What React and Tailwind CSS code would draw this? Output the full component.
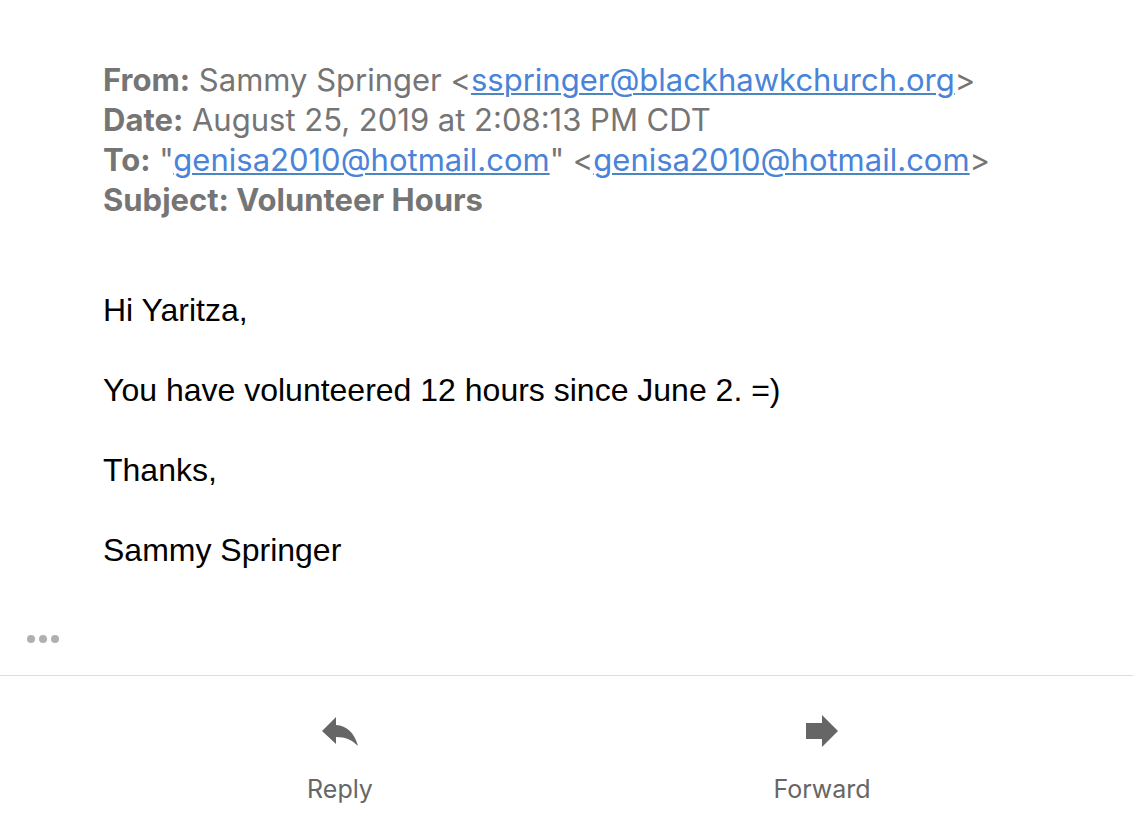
import React from 'react';

const message = {
  from: "Sammy Springer",
  fromEmail: "sspringer@blackhawkchurch.org",
  date: "August 25, 2019 at 2:08:13 PM CDT",
  toEmail: "genisa2010@hotmail.com",
  subject: "Volunteer Hours",
  body: [
    "Hi Yaritza,",
    "You have volunteered 12 hours since June 2. =)",
    "Thanks,",
    "Sammy Springer",
  ],
}

const MailLink = function ({ email }) {
  return (
    <a href={`mailto:${email}`} className="text-[#4a83d8] underline decoration-[#4a86c0] decoration-2 underline-offset-2">
      {email}
    </a>
  )
}

const App = function () {
  return (
    <div className="bg-white font-['Inter',sans-serif]">
      <main className="px-[103px] pt-15">
        <header className="text-[31px] leading-10 text-[#757575]">
          <p><b className="font-bold">From:</b> {message.from} &lt;<MailLink email={message.fromEmail} />&gt;</p>
          <p><b className="font-bold">Date:</b> {message.date}</p>
          <p>
            <b className="font-bold">To:</b> "<MailLink email={message.toEmail} />" &lt;<MailLink email={message.toEmail} />&gt;
          </p>
          <p className="font-bold">Subject: {message.subject}</p>
        </header>

        <section className="mt-[70px] flex flex-col gap-10 font-['Liberation_Sans',sans-serif] text-[32px] leading-10 text-black">
          {message.body.map((line) => (
            <p key={line}>{line}</p>
          ))}
        </section>
      </main>

      <div className="px-[27px] pt-[59px] pb-[26px]">
        <button type="button" aria-label="Show trimmed content" className="flex h-5 items-center gap-1">
          <span className="size-2 rounded-full bg-[#b0b0b0]" />
          <span className="size-2 rounded-full bg-[#b0b0b0]" />
          <span className="size-2 rounded-full bg-[#b0b0b0]" />
        </button>
      </div>

      <footer className="grid grid-cols-2 justify-items-center border-t border-[#dddddd] pt-[38px] pr-[70px] pb-4 pl-[99px] text-[25px] leading-8 text-[#666666]">
        <button type="button" className="flex flex-col items-center gap-[25px]">
          <svg viewBox="0 0 36 34" className="h-[34px] w-9" fill="#666666">
            <path d="M0 17L14 3v8c11 1 18 7 22 21c-6-6-12-9-22-9v7z" />
          </svg>
          Reply
        </button>
        <button type="button" className="flex flex-col items-center gap-[25px]">
          <svg viewBox="0 0 36 34" className="h-[34px] w-9" fill="#666666">
            <path d="M2 9h16V1l16 16l-16 16v-8H2z" />
          </svg>
          Forward
        </button>
      </footer>
    </div>
  )
}

export default App
